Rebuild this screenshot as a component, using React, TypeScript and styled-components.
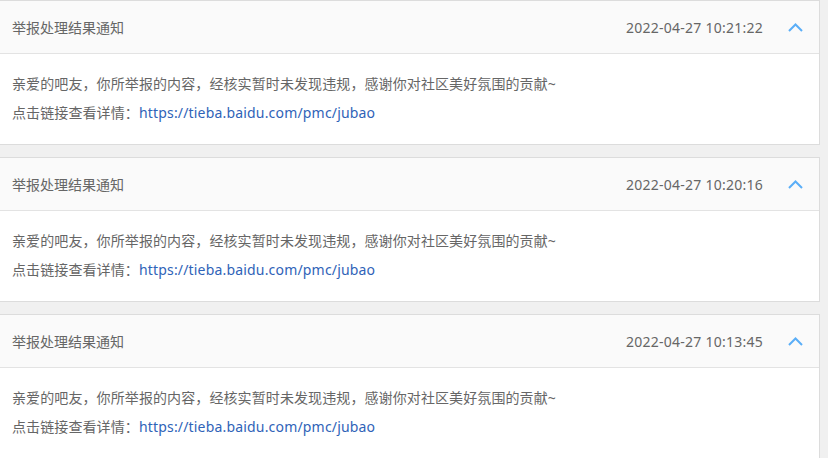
import React from 'react';
import styled, { createGlobalStyle } from 'styled-components';

const GlobalStyle = createGlobalStyle`
	html, body {
		margin: 0;
		padding: 0;
		background: #f0f0f0;
	}
	body {
		font-family: 'Noto Sans', 'Noto Sans CJK SC', sans-serif;
		font-size: 14px;
		color: #666;
	}
`

const List = styled.div`
	display: flex;
	flex-direction: column;
	gap: 12px;
	width: 820px;
`

const Card = styled.div`
	background: #fff;
	border: 1px solid #dcdcdc;
	border-left-width: 0;
`

const Header = styled.div`
	height: 52px;
	display: flex;
	align-items: center;
	padding: 0 16px 0 12px;
	background: #fafafa;
	border-bottom: 1px solid #e3e3e3;
`

const Title = styled.div`
	flex: 1;
	font-size: 14px;
	color: #666;
`

const Time = styled.div`
	font-size: 14px;
	color: #666;
	letter-spacing: 0.25px;
	margin-right: 25px;
`

const Toggle = styled.svg`
	width: 15px;
	height: 9px;
	display: block;
`

const Body = styled.div`
	padding: 15px 12px 17px 12px;
	line-height: 29px;
	font-size: 14px;
	color: #666;
`

const Line = styled.div`
	letter-spacing: 0.1px;
`

const Link = styled.a`
	color: #2f63b8;
	text-decoration: none;
	letter-spacing: 0.18px;
`

type Notice = {
	id: number
	time: string
}

const notices: Notice[] = [
	{ id: 1, time: '2022-04-27 10:21:22' },
	{ id: 2, time: '2022-04-27 10:20:16' },
	{ id: 3, time: '2022-04-27 10:13:45' },
]

function NoticeCard(props: { notice: Notice }) {
	return (<Card>
		<Header>
			<Title>举报处理结果通知</Title>
			<Time>{props.notice.time}</Time>
			<Toggle viewBox="0 0 15 9">
				<path d="M1 8 L7.5 1.5 L14 8" fill="none" stroke="#5aaef7" strokeWidth="2" />
			</Toggle>
		</Header>
		<Body>
			<Line>亲爱的吧友，你所举报的内容，经核实暂时未发现违规，感谢你对社区美好氛围的贡献~</Line>
			<Line>点击链接查看详情：<Link href="#">https://tieba.baidu.com/pmc/jubao</Link></Line>
		</Body>
	</Card>)
}

export default function App() {
	return (<>
		<GlobalStyle />
		<List>
			{notices.map(n => <NoticeCard key={n.id} notice={n} />)}
		</List>
	</>)
}
